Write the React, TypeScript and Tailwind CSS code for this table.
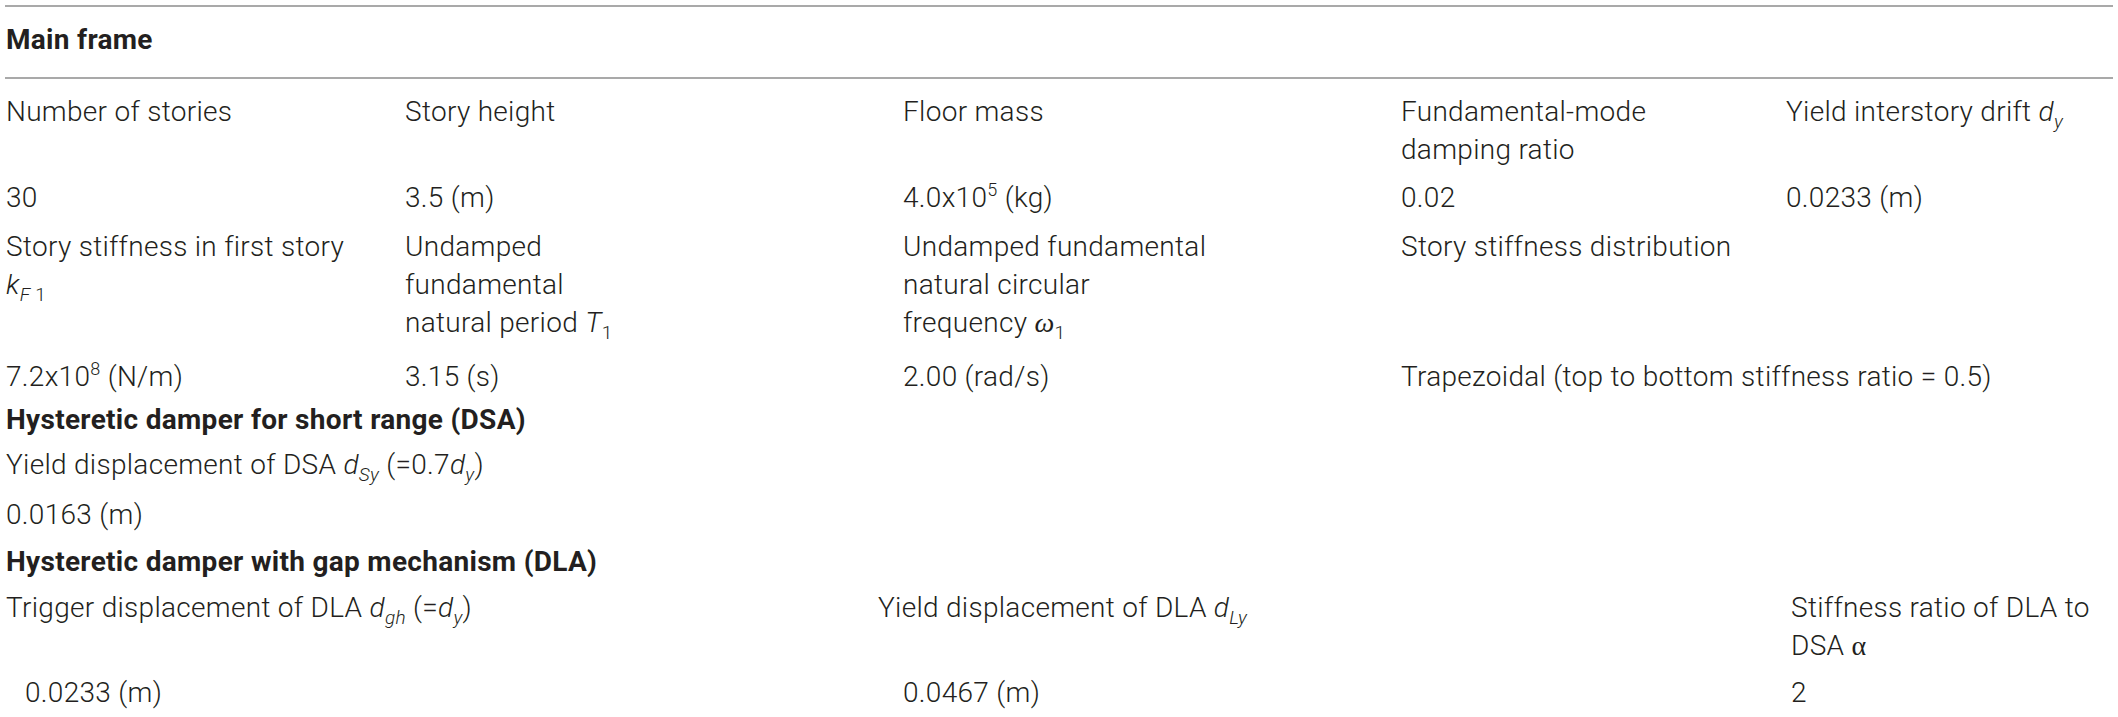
import React from "react";

const txt = "text-[28px] leading-[38px] font-light text-[#231f20] tracking-[0.3px]";

function Sub({ children, italic = false }: { children: React.ReactNode; italic?: boolean }) {
  return (
    <span className={`relative top-[7px] text-[19px] leading-none ${italic ? "italic" : ""}`}>
      {children}
    </span>
  );
}

function Sup({ children }: { children: React.ReactNode }) {
  return <span className="relative -top-[11px] text-[18px] leading-none">{children}</span>;
}

function V({ children }: { children: React.ReactNode }) {
  return <span className="italic">{children}</span>;
}

export default function App() {
  return (
    <div
      className="w-[2118px] h-[717px] bg-white overflow-hidden pt-[5px]"
      style={{ fontFamily: "Roboto, 'Liberation Sans', Arial, sans-serif" }}
    >
      <div className="mx-[5px] h-[2px] bg-[#a9a9a9]" />

      {/* Main frame */}
      <div className={`pl-[6px] pt-[14px] pb-[18px] ${txt} !font-bold`}>Main frame</div>
      <div className="mx-[5px] h-[2px] bg-[#a9a9a9]" />

      <div className={`grid grid-cols-[399px_498px_498px_385px_1fr] pl-[6px] ${txt}`}>
        {/* row 1 header */}
        <div className="pt-[14px]">Number of stories</div>
        <div className="pt-[14px]">Story height</div>
        <div className="pt-[14px]">Floor mass</div>
        <div className="pt-[14px]">
          Fundamental-mode
          <br />
          damping ratio
        </div>
        <div className="pt-[14px]">
          Yield interstory drift <V>d</V>
          <Sub italic>y</Sub>
        </div>

        {/* row 1 values */}
        <div className="pt-[10px]">30</div>
        <div className="pt-[10px]">3.5 (m)</div>
        <div className="pt-[10px]">
          4.0x10<Sup>5</Sup> (kg)
        </div>
        <div className="pt-[10px]">0.02</div>
        <div className="pt-[10px]">0.0233 (m)</div>

        {/* row 2 header */}
        <div className="pt-[11px]">
          Story stiffness in first story
          <br />
          <V>k</V>
          <Sub>
            <span className="italic">F</span> 1
          </Sub>
        </div>
        <div className="pt-[11px]">
          Undamped
          <br />
          fundamental
          <br />
          natural period <V>T</V>
          <Sub>1</Sub>
        </div>
        <div className="pt-[11px]">
          Undamped fundamental
          <br />
          natural circular
          <br />
          frequency{" "}
          <span className="italic" style={{ fontFamily: "'Liberation Serif', serif" }}>
            ω
          </span>
          <Sub>1</Sub>
        </div>
        <div className="pt-[11px] col-span-2">Story stiffness distribution</div>

        {/* row 2 values */}
        <div className="pt-[16px]">
          7.2x10<Sup>8</Sup> (N/m)
        </div>
        <div className="pt-[16px]">3.15 (s)</div>
        <div className="pt-[16px]">2.00 (rad/s)</div>
        <div className="pt-[16px] col-span-2">Trapezoidal (top to bottom stiffness ratio = 0.5)</div>
      </div>

      {/* DSA */}
      <div className={`pl-[6px] pt-[5px] ${txt} !font-bold`}>Hysteretic damper for short range (DSA)</div>
      <div className={`pl-[6px] pt-[7px] ${txt}`}>
        Yield displacement of DSA <V>d</V>
        <Sub italic>Sy</Sub> (=0.7<V>d</V>
        <Sub italic>y</Sub>)
      </div>
      <div className={`pl-[6px] pt-[12px] ${txt}`}>0.0163 (m)</div>

      {/* DLA */}
      <div className={`pl-[6px] pt-[9px] ${txt} !font-bold`}>Hysteretic damper with gap mechanism (DLA)</div>
      <div className={`grid grid-cols-[872px_913px_1fr] pl-[6px] ${txt}`}>
        <div className="pt-[8px]">
          Trigger displacement of DLA <V>d</V>
          <Sub italic>gh</Sub> (=<V>d</V>
          <Sub italic>y</Sub>)
        </div>
        <div className="pt-[8px]">
          Yield displacement of DLA <V>d</V>
          <Sub italic>Ly</Sub>
        </div>
        <div className="pt-[8px]">
          Stiffness ratio of DLA to
          <br />
          DSA <span style={{ fontFamily: "'Liberation Serif', serif" }}>α</span>
        </div>

        <div className="pt-[9px] pl-[19px]">0.0233 (m)</div>
        <div className="pt-[9px] pl-[25px]">0.0467 (m)</div>
        <div className="pt-[9px]">2</div>
      </div>
    </div>
  );
}
